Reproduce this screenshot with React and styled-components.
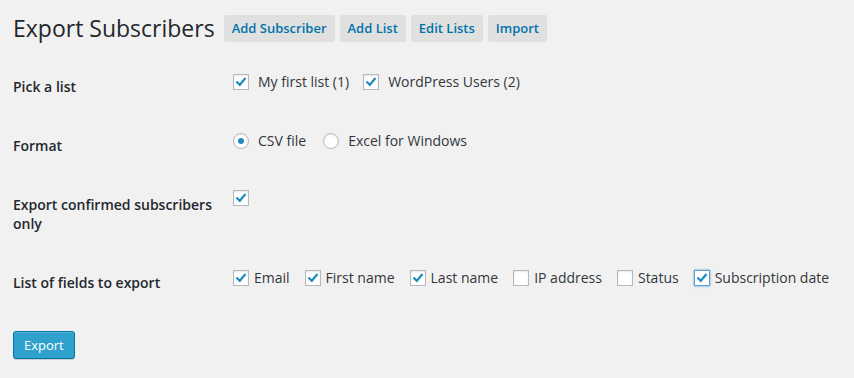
import React from 'react';
import styled, { createGlobalStyle } from 'styled-components';

const GlobalStyle = createGlobalStyle`
  html, body {
    margin: 0;
    padding: 0;
    background: #f1f1f1;
  }
  body {
    font-family: "Open Sans", "Liberation Sans", sans-serif;
    font-size: 13px;
    color: #444;
  }
`;

const Wrap = styled.div`
  padding: 14px 20px 20px 13px;
`;

const Header = styled.div`
  display: flex;
  align-items: center;
  gap: 5px;
  height: 28px;
`;

const Title = styled.h1`
  margin: 0 4px 0 0;
  font-size: 23px;
  font-weight: 400;
  line-height: 29px;
  color: #23282d;
`;

const TitleAction = styled.a`
  display: inline-flex;
  align-items: center;
  height: 27px;
  padding: 0 8px;
  border-radius: 2px;
  background: #e0e0e0;
  color: #0073aa;
  font-size: 13px;
  font-weight: 600;
  text-decoration: none;
`;

const FormTable = styled.div`
  margin-top: 15px;
`;

const Row = styled.div`
  display: grid;
  grid-template-columns: 210px 1fr;
`;

const Label = styled.div`
  padding: 20px 10px 20px 0;
  font-size: 14px;
  font-weight: 600;
  line-height: 19px;
  color: #23282d;
`;

const Field = styled.div`
  padding: 15px 10px;
  display: flex;
  align-items: flex-start;
  gap: ${p => p.$gap || 16}px;
`;

const Option = styled.label`
  display: inline-flex;
  align-items: center;
  gap: ${p => p.$gap || 10}px;
  font-size: 14px;
  line-height: 19px;
  color: #32373c;
  white-space: nowrap;
`;

const Box = styled.span`
  width: 14px;
  height: 14px;
  flex: none;
  display: inline-flex;
  align-items: center;
  justify-content: center;
  background: #fff;
  border: 1px solid ${p => (p.$focus ? '#5b9dd9' : '#b4b9be')};
  box-shadow: ${p => (p.$focus ? '0 0 2px rgba(30,140,190,.8)' : 'inset 0 1px 2px rgba(0,0,0,.1)')};
  border-radius: ${p => (p.$round ? '50%' : '0')};
`;

const Dot = styled.span`
  width: 6px;
  height: 6px;
  border-radius: 50%;
  background: #1e8cbe;
`;

const Check = () => (
  <svg width="12" height="12" viewBox="0 0 12 12">
    <path d="M2.2 6.2 L4.8 8.8 L9.8 2.8" fill="none" stroke="#1e8cbe" strokeWidth="2.2" strokeLinecap="square" />
  </svg>
);

const Checkbox = ({ checked, focus }) => (
  <Box $focus={focus}>{checked && <Check />}</Box>
);

const Radio = ({ checked }) => (
  <Box $round>{checked && <Dot />}</Box>
);

const Submit = styled.div`
  padding-top: 19px;
`;

const PrimaryButton = styled.button`
  height: 28px;
  padding: 0 10px;
  border: 1px solid #0074a2;
  border-radius: 3px;
  background: #2ea2cc;
  box-shadow: inset 0 1px 0 rgba(120, 200, 230, .5), 0 1px 0 rgba(0, 0, 0, .15);
  color: #fff;
  font-family: "Open Sans", "Liberation Sans", sans-serif;
  font-size: 13px;
  line-height: 26px;
`;

const fields = [
  { name: 'Email', checked: true },
  { name: 'First name', checked: true },
  { name: 'Last name', checked: true },
  { name: 'IP address', checked: false },
  { name: 'Status', checked: false },
  { name: 'Subscription date', checked: true, focus: true },
];

export default function App() {
  return (
    <>
      <GlobalStyle />
      <Wrap>
        <Header>
          <Title>Export Subscribers</Title>
          <TitleAction>Add Subscriber</TitleAction>
          <TitleAction>Add List</TitleAction>
          <TitleAction>Edit Lists</TitleAction>
          <TitleAction>Import</TitleAction>
        </Header>

        <FormTable>
          <Row>
            <Label>Pick a list</Label>
            <Field $gap={14}>
              <Option $gap={9}><Checkbox checked />My first list (1)</Option>
              <Option $gap={9}><Checkbox checked />WordPress Users (2)</Option>
            </Field>
          </Row>
          <Row>
            <Label>Format</Label>
            <Field $gap={17}>
              <Option $gap={9}><Radio checked />CSV file</Option>
              <Option $gap={9}><Radio />Excel for Windows</Option>
            </Field>
          </Row>
          <Row>
            <Label>Export confirmed subscribers only</Label>
            <Field>
              <Option><Checkbox checked /></Option>
            </Field>
          </Row>
          <Row>
            <Label>List of fields to export</Label>
            <Field $gap={15}>
              {fields.map(f => (
                <Option key={f.name} $gap={5}>
                  <Checkbox checked={f.checked} focus={f.focus} />
                  {f.name}
                </Option>
              ))}
            </Field>
          </Row>
        </FormTable>

        <Submit>
          <PrimaryButton>Export</PrimaryButton>
        </Submit>
      </Wrap>
    </>
  );
}
